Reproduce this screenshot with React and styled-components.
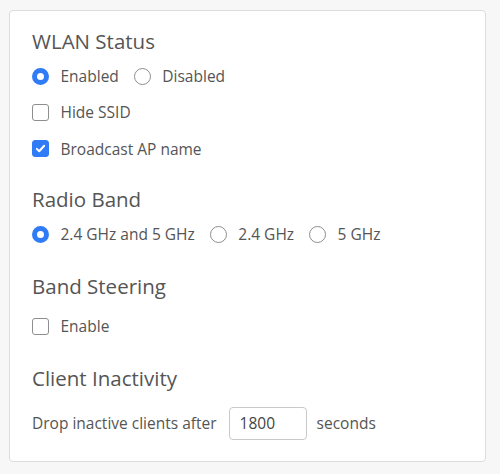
import React from "react";
import styled, { createGlobalStyle } from "styled-components";

const GlobalStyle = createGlobalStyle`
  body {
    margin: 0;
    background: #f7f7f7;
    font-family: "Open Sans", "Liberation Sans", sans-serif;
    color: #555;
  }
`;

const Page = styled.div`
  padding: 10px 14px 11px 9px;
`;

const Card = styled.div`
  background: #fff;
  border: 1px solid #dcdcdc;
  border-radius: 4px;
  padding: 18px 22px 20px 22px;
`;

const Section = styled.section`
  margin-top: ${(p) => p.top || 0}px;
`;

const Heading = styled.h2`
  margin: 0 0 ${(p) => p.gap || 5}px 0;
  font-size: 20.5px;
  line-height: 24px;
  font-weight: 400;
  color: #555;
`;

const Row = styled.div`
  display: flex;
  align-items: center;
  height: ${(p) => p.h || 36}px;
  gap: ${(p) => p.gap || 15}px;
  font-size: 15.5px;
`;

const Option = styled.label`
  display: flex;
  align-items: center;
  gap: 11.5px;
`;

const RadioMark = styled.span`
  box-sizing: border-box;
  width: 17px;
  height: 17px;
  border-radius: 50%;
  border: ${(p) => (p.checked ? "5px solid #2f7cf6" : "1px solid #8e8e8e")};
  background: #fff;
  flex-shrink: 0;
`;

const CheckMark = styled.span`
  box-sizing: border-box;
  width: 17px;
  height: 17px;
  border-radius: 3px;
  border: 1px solid ${(p) => (p.checked ? "#2f7cf6" : "#8e8e8e")};
  background: ${(p) => (p.checked ? "#2f7cf6" : "#fff")};
  display: flex;
  align-items: center;
  justify-content: center;
  flex-shrink: 0;
`;

const NumberInput = styled.input`
  box-sizing: border-box;
  width: 78px;
  height: 33px;
  margin-right: -2px;
  border: 1px solid #c9c9c9;
  border-radius: 4px;
  padding: 0 10px;
  font-family: inherit;
  font-size: 15.5px;
  color: #444;
  outline: none;
`;

const Radio = ({ checked, children }) => (
  <Option>
    <RadioMark checked={checked} />
    {children}
  </Option>
);

const Checkbox = ({ checked, children }) => (
  <Option>
    <CheckMark checked={checked}>
      {checked && (
        <svg width="11" height="11" viewBox="0 0 12 12">
          <path d="M2 6.4l2.6 2.6L10 3" fill="none" stroke="#fff" strokeWidth="2.2" strokeLinecap="round" strokeLinejoin="round" />
        </svg>
      )}
    </CheckMark>
    {children}
  </Option>
);

export default function App() {
  return (
    <Page>
      <GlobalStyle />
      <Card>
        <Section>
          <Heading gap={5}>WLAN Status</Heading>
          <Row>
            <Radio checked>Enabled</Radio>
            <Radio>Disabled</Radio>
          </Row>
          <Row h={36.5}>
            <Checkbox>Hide SSID</Checkbox>
          </Row>
          <Row h={36.5}>
            <Checkbox checked>Broadcast AP name</Checkbox>
          </Row>
        </Section>
        <Section top={20}>
          <Heading gap={5}>Radio Band</Heading>
          <Row>
            <Radio checked>2.4 GHz and 5 GHz</Radio>
            <Radio>2.4 GHz</Radio>
            <Radio>5 GHz</Radio>
          </Row>
        </Section>
        <Section top={22}>
          <Heading gap={10}>Band Steering</Heading>
          <Row>
            <Checkbox>Enable</Checkbox>
          </Row>
        </Section>
        <Section top={22}>
          <Heading gap={15}>Client Inactivity</Heading>
          <Row gap={12}>
            <span>Drop inactive clients after</span>
            <NumberInput defaultValue="1800" />
            <span>seconds</span>
          </Row>
        </Section>
      </Card>
    </Page>
  );
}
